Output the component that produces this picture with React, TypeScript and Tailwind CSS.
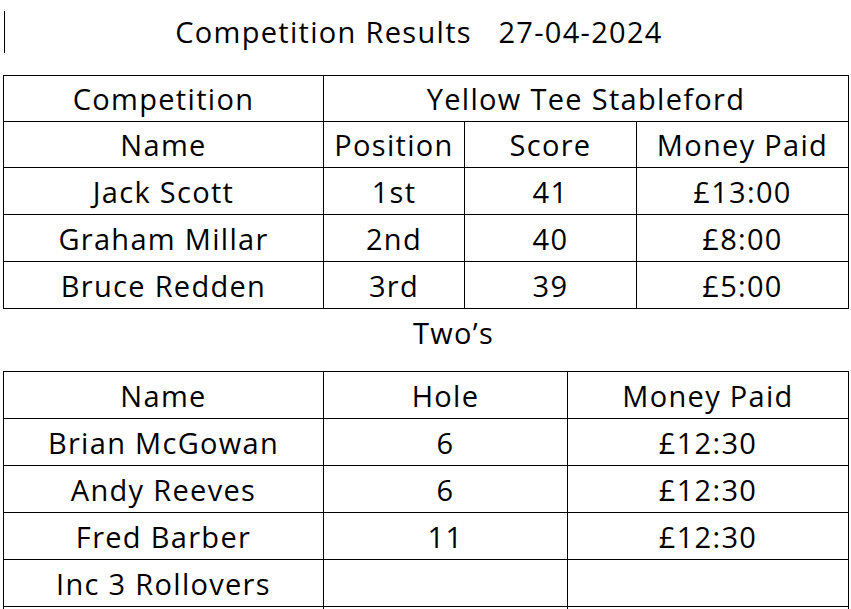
import React from "react";

const cell = "border border-black text-center align-middle p-0 leading-none whitespace-nowrap";

export default function App() {
  return (
    <div className="w-[851px] h-[609px] bg-white overflow-hidden text-black font-['Open_Sans',sans-serif] text-[29px] tracking-[1.3px]">
      <div className="relative h-[75px]">
        <div className="absolute left-[4px] top-[11px] h-[42px] w-px bg-black" />
        <div className="w-[838px] pt-[14px] text-center leading-[36px] whitespace-pre">
          Competition Results   27-04-2024
        </div>
      </div>
      <table className="ml-[3px] w-[845px] table-fixed border-collapse">
        <colgroup>
          <col className="w-[320px]" />
          <col className="w-[141px]" />
          <col className="w-[172px]" />
          <col className="w-[212px]" />
        </colgroup>
        <tbody>
          <tr className="h-[46px]">
            <td className={cell}>Competition</td>
            <td className={cell} colSpan={3}>Yellow Tee Stableford</td>
          </tr>
          <tr className="h-[46px]">
            <td className={cell}>Name</td>
            <td className={cell}>Position</td>
            <td className={cell}>Score</td>
            <td className={cell}>Money Paid</td>
          </tr>
          {[
            ["Jack Scott", "1st", "41", "£13:00"],
            ["Graham Millar", "2nd", "40", "£8:00"],
            ["Bruce Redden", "3rd", "39", "£5:00"],
          ].map((r) => (
            <tr className="h-[47px]" key={r[0]}>
              {r.map((c, i) => (
                <td className={cell} key={i}>{c}</td>
              ))}
            </tr>
          ))}
        </tbody>
      </table>
      <div className="h-[62px] pl-[56px] pt-[6px] text-center leading-[36px]">Two’s</div>
      <table className="ml-[3px] w-[845px] table-fixed border-collapse">
        <colgroup>
          <col className="w-[320px]" />
          <col className="w-[244px]" />
          <col className="w-[281px]" />
        </colgroup>
        <tbody>
          {[
            ["Name", "Hole", "Money Paid"],
            ["Brian McGowan", "6", "£12:30"],
            ["Andy Reeves", "6", "£12:30"],
            ["Fred Barber", "11", "£12:30"],
            ["Inc 3 Rollovers", "", ""],
            ["", "", ""],
          ].map((r, k) => (
            <tr className="h-[47px]" key={k}>
              {r.map((c, i) => (
                <td className={cell} key={i}>{c}</td>
              ))}
            </tr>
          ))}
        </tbody>
      </table>
    </div>
  );
}
